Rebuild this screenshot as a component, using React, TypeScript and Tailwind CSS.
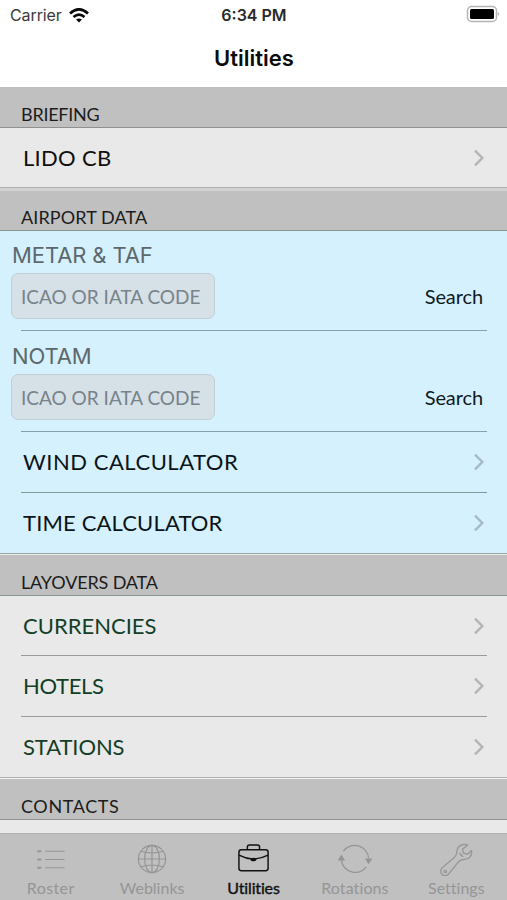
import type { ReactNode } from 'react';

interface RowData {
  label: string;
  className: string;
}

interface TabData {
  label: string;
  className: string;
  icon: ReactNode;
  active?: boolean;
}

const airportRows: RowData[] = [
  { label: 'WIND CALCULATOR', className: 'text-[#0b1418] tracking-[0.52px]' },
  { label: 'TIME CALCULATOR', className: 'text-[#0b1418] tracking-[0.15px]' },
];

const layoverRows: RowData[] = [
  { label: 'CURRENCIES', className: 'text-[#123f26]' },
  { label: 'HOTELS', className: 'text-[#123f26] tracking-[-0.35px]' },
  { label: 'STATIONS', className: 'text-[#123f26] tracking-[-0.1px]' },
];

const tabs: TabData[] = [
  {
    label: 'Roster',
    className: 'tracking-[0.4px]',
    icon: (
      <svg width="40" height="36" viewBox="0 0 40 36" fill="none" stroke="currentColor" strokeWidth="1.2">
        <path d="M14 10.500h20M14 19h20M14 27.500h20" />
        <path d="M6 10.500h4M6 19h4M6 27.500h4" strokeWidth="2" />
      </svg>
    ),
  },
  {
    label: 'Weblinks',
    className: '',
    icon: (
      <svg width="40" height="36" viewBox="0 0 40 36" fill="none" stroke="currentColor" strokeWidth="1.2">
        <circle cx="20" cy="18.500" r="14" />
        <ellipse cx="20" cy="18.500" rx="7.600" ry="14" />
        <path d="M20 4.500v28M6 18.500h28M8.500 10.500q11.500 3.600 23 0M8.500 26.500q11.500-3.600 23 0" />
      </svg>
    ),
  },
  {
    label: 'Utilities',
    className: 'tracking-[-0.15px] [-webkit-text-stroke:0.4px_#111]',
    active: true,
    icon: (
      <svg width="40" height="36" viewBox="0 0 40 36" fill="none" stroke="currentColor" strokeWidth="1.500">
        <rect x="4.500" y="9" width="30" height="21.500" rx="2.500" />
        <path d="M13.200 9V6.200q0-2 2-2h8.500q2 0 2 2V9" />
        <path d="M4.500 14.500Q11.200 18 19.500 18.700Q27.700 18 34.500 14.500" />
        <ellipse cx="19.500" cy="19" rx="3" ry="1.900" fill="currentColor" stroke="none" />
      </svg>
    ),
  },
  {
    label: 'Rotations',
    className: 'tracking-[0.1px]',
    icon: (
      <svg width="40" height="36" viewBox="0 0 40 36" fill="none" stroke="currentColor" strokeWidth="1.300">
        <path d="M8 10.500A14.300 14.300 0 0 1 34 18" />
        <path d="M31.500 26.500A14.300 14.300 0 0 1 6 20" />
        <path d="M2.200 20L6 14l3.800 6zM30.200 18h7.600L34 24z" fill="currentColor" stroke="none" />
      </svg>
    ),
  },
  {
    label: 'Settings',
    className: '',
    icon: (
      <svg width="40" height="36" viewBox="0 0 40 36" fill="none" stroke="currentColor" strokeWidth="1.300" strokeLinejoin="round">
        <path d="M32 4.300C27 1.800 21.300 5.200 21 10.600C20.900 13.500 20 15.300 18 17.200L6 27.400C3.800 29.400 3.700 32.600 5.700 34.500C7.700 36.300 10.800 36 12.500 33.900L21.900 22.300C24 19.800 25.800 19 28.700 19C33.700 19 37 14.700 36 9.800L31.800 13.600L27.500 12.400L26.800 8.300Z" />
        <circle cx="9" cy="31.300" r="1.200" />
        <path d="M23.700 12q1.200 3.200 3.800 4" />
      </svg>
    ),
  },
];

const Chevron = ({ className }: { className: string }) => (
  <svg className={className} width="12" height="18" viewBox="0 0 12 18" fill="none" stroke="currentColor" strokeWidth="2.400">
    <path d="M2 1.700L9.300 9L2 16.300" />
  </svg>
);

const SectionHeader = ({ title, className }: { title: string; className: string }) => (
  <div className={`flex items-end border-b bg-[#c0c0c0] pl-[21px] ${className}`}>
    <h2 className="text-[18px] leading-[26px] text-[#1c1c1c]">{title}</h2>
  </div>
);

const Row = ({ label, className, chevron }: RowData & { chevron: string }) => (
  <div className="flex h-full items-center justify-between pr-[22px] pl-[23px]">
    <span className={`text-[22px] leading-7 ${className}`}>{label}</span>
    <Chevron className={chevron} />
  </div>
);

const Divider = ({ className }: { className: string }) => (
  <div className={`mr-[20px] ml-[21px] h-px shrink-0 ${className}`} />
);

const SearchField = ({ title }: { title: string }) => (
  <div className="pr-[24px] pl-[12px]">
    <h3 className="font-[Inter,sans-serif] text-[22px] leading-7 tracking-[-0.1px] text-[#5d686d]">{title}</h3>
    <div className="mt-[4px] flex items-center justify-between">
      <input
        className="-ml-px h-[46px] w-[204px] rounded-[7px] border border-[#c3cfd6] bg-[#d6e0e7] px-[9px] text-[19px] text-[#6f7a80] outline-none placeholder:text-[#78838a]"
        placeholder="ICAO OR IATA CODE"
      />
      <button className="text-[20px] tracking-[-0.1px] text-[#0f1a1f]">Search</button>
    </div>
  </div>
);

const App = () => {
  return (
    <div className="flex h-[900px] w-[507px] flex-col overflow-hidden bg-[#e9e9e9] font-[Lato,sans-serif]">
      {/* Status bar */}
      <header className="h-[87px] shrink-0 bg-white font-[Inter,sans-serif]">
        <div className="grid h-[30px] grid-cols-3 items-center pr-[7px] pl-[10px] text-[16px]">
          <div className="flex items-center gap-[7px] text-[#3a3a3a]">
            <span className="tracking-[-0.1px]">Carrier</span>
            <svg width="20" height="15" viewBox="0 0 20 15" fill="none" stroke="#0a0a0a" strokeWidth="2.700">
              <path d="M1 5.400Q10-2.600 19 5.400" />
              <path d="M4.500 9Q10 4.200 15.500 9" />
              <path d="M7 11.500Q10 9.300 13 11.500L10 14.600Z" fill="#0a0a0a" stroke="none" />
            </svg>
          </div>
          <span className="-ml-[2px] text-center font-semibold text-[#2a2a2a]">6:34 PM</span>
          <svg className="-mt-[2px] justify-self-end" width="34" height="18" viewBox="0 0 34 18">
            <rect x="1.500" y="1.500" width="29" height="15" rx="4" fill="none" stroke="#b5b5b5" strokeWidth="1.500" />
            <rect x="4" y="4" width="24" height="10" rx="1.500" fill="#000" />
            <path d="M31.800 7v4q1.500-.8 1.500-2t-1.500-2z" fill="#b5b5b5" />
          </svg>
        </div>
        <h1 className="mt-[14px] pl-px text-center text-[22px] leading-7 font-semibold text-[#0c0c0c]">Utilities</h1>
      </header>

      {/* Utilities list */}
      <main className="min-h-0 flex-1 overflow-hidden">
        <SectionHeader title="BRIEFING" className="h-[41px] border-[#909090] tracking-[-0.25px]" />
        <div className="h-[59px]">
          <Row label="LIDO CB" className="text-[#0f0f0f] tracking-[0.3px]" chevron="text-[#b4b4b4]" />
        </div>
        <div className="h-[4px] border-t border-[#b0b0b0] bg-[#d2d2d2]" />

        <SectionHeader title="AIRPORT DATA" className="h-[40px] border-[#84998d] tracking-[0.1px]" />
        <div className="bg-[#d5f1fe]">
          <div className="h-[99px] pt-[10px]">
            <SearchField title="METAR & TAF" />
          </div>
          <Divider className="bg-[#86a0ac]" />
          <div className="h-[100px] pt-[11px]">
            <SearchField title="NOTAM" />
          </div>
          <Divider className="bg-[#86a0ac]" />
          {airportRows.map((row, idx) => (
            <div key={row.label}>
              {idx > 0 && <Divider className="bg-[#7f9c98]" />}
              <div className="h-[60px]">
                <Row {...row} chevron="text-[#a6bac5]" />
              </div>
            </div>
          ))}
        </div>
        <div className="h-[2px] border-t border-[#98aaa0] bg-[#e6eeee]" />

        <SectionHeader title="LAYOVERS DATA" className="h-[41px] border-[#869890] tracking-[-0.15px]" />
        {layoverRows.map((row, idx) => (
          <div key={row.label}>
            {idx > 0 && <Divider className="bg-[#989d9b]" />}
            <div className={idx > 0 ? 'h-[60px]' : 'h-[59px]'}>
              <Row {...row} chevron="text-[#b4b4b4]" />
            </div>
          </div>
        ))}
        <div className="h-[2px] border-t border-[#b0b0b0] bg-[#f2f2f2]" />

        <SectionHeader title="CONTACTS" className="h-[41px] border-[#909090] tracking-[0.6px]" />
      </main>

      {/* Tab bar */}
      <nav className="flex h-[67px] shrink-0 border-t border-[#b2b2b2] bg-[#c0c0c0]">
        {tabs.map((tab) => (
          <div
            key={tab.label}
            className={`flex flex-1 flex-col items-center pt-[7px] ${tab.active ? 'text-[#111]' : 'text-[#959595]'}`}
          >
            {tab.icon}
            <span className={`text-[16px] leading-6 [font-variant-ligatures:none] ${tab.className}`}>{tab.label}</span>
          </div>
        ))}
      </nav>
    </div>
  );
};

export default App;
